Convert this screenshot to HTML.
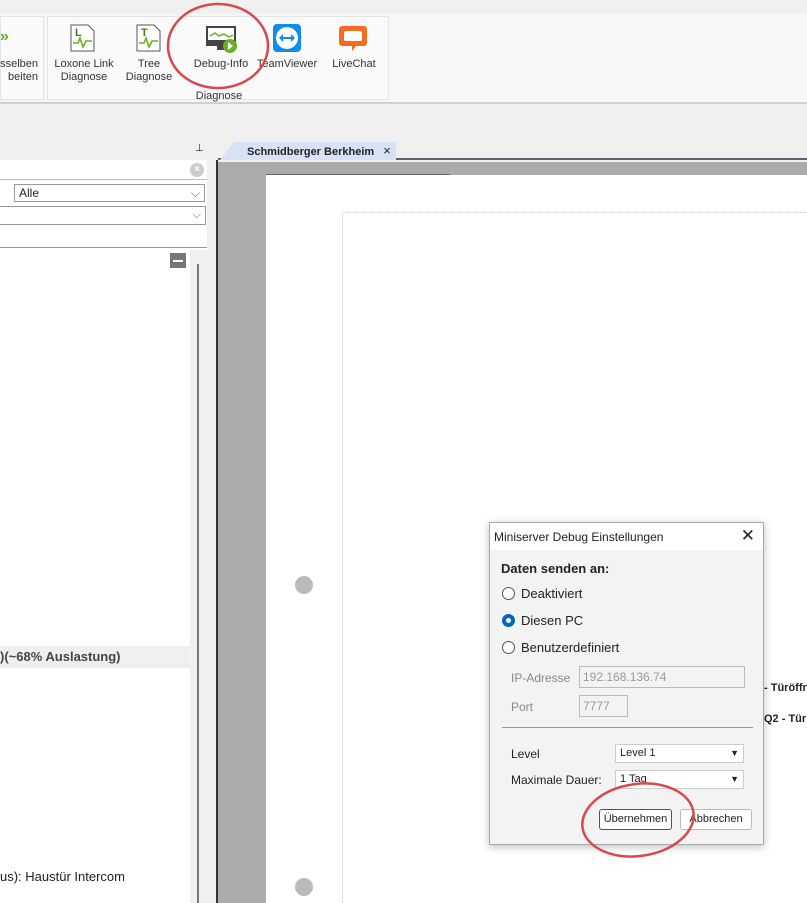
<!DOCTYPE html>
<html><head><meta charset="utf-8"><style>
*{margin:0;padding:0;box-sizing:border-box}
body{width:807px;height:903px;overflow:hidden;background:#f0f0f0;font-family:"Liberation Sans",sans-serif;font-size:12px;color:#222;position:relative}
.a{position:absolute;white-space:nowrap}
.lbl{font-size:11px;text-align:center;color:#333;line-height:13px}
.rb{border-radius:50%;border:1px solid #555;width:13px;height:13px;background:#fff}
.sel{border:1px solid #999;background:#fff;font-size:11px;padding-left:4px;line-height:16px}
</style></head><body>
<div class="a" style="left:0;top:0;width:807px;height:14px;background:#f0f0f0"></div>
<div class="a" style="left:0;top:14px;width:807px;height:90px;background:#f7f7f7;border-bottom:2px solid #d0d0d0"></div>
<div class="a" style="left:0;top:16px;width:44px;height:84px;border:1px solid #e4e4e4;background:#fafafa"></div>
<div class="a" style="left:47px;top:16px;width:342px;height:84px;border:1px solid #e4e4e4;background:#fafafa"></div>
<div class="a" style="left:0;top:28px;width:10px;height:18px;color:#6a3;font-weight:bold;font-size:16px">»</div>
<div class="a lbl" style="left:0;top:58px;width:38px;text-align:right">sselben<br>beiten</div>
<svg class="a" style="left:70px;top:24px" width="26" height="28"><path d="M1 1h17l6 6v20H1z" fill="#fff" stroke="#555"/><text x="5" y="12" font-size="11" font-weight="bold" fill="#4a7d10" font-family="Liberation Sans">L</text><path d="M3 19h5l2-5 3 9 3-6h6" fill="none" stroke="#6ab023" stroke-width="1.6"/></svg>
<div class="a lbl" style="left:50px;top:58px;width:68px">Loxone Link<br>Diagnose</div>
<svg class="a" style="left:136px;top:24px" width="26" height="28"><path d="M1 1h17l6 6v20H1z" fill="#fff" stroke="#555"/><text x="5" y="12" font-size="11" font-weight="bold" fill="#4a7d10" font-family="Liberation Sans">T</text><path d="M3 19h5l2-5 3 9 3-6h6" fill="none" stroke="#6ab023" stroke-width="1.6"/></svg>
<div class="a lbl" style="left:122px;top:58px;width:54px">Tree<br>Diagnose</div>
<svg class="a" style="left:206px;top:26px" width="32" height="28"><rect x="1" y="1" width="28" height="18" fill="#fff" stroke="#444" stroke-width="2"/><rect x="1" y="14" width="28" height="5" fill="#444"/><path d="M4 10l5-3 4 3 5-2 5 3 4-2" fill="none" stroke="#6ab023" stroke-width="1.5"/><rect x="11" y="20" width="8" height="4" fill="#444"/><circle cx="24" cy="20" r="7" fill="#6ab023"/><path d="M22 16l5 4-5 4z" fill="#fff"/></svg>
<div class="a lbl" style="left:186px;top:58px;width:70px">Debug-Info</div>
<div class="a lbl" style="left:186px;top:90px;width:66px">Diagnose</div>
<svg class="a" style="left:273px;top:24px" width="28" height="28"><rect width="28" height="28" rx="4" fill="#0e8ee9"/><circle cx="14" cy="14" r="11" fill="#fff"/><path d="M6 14l4-4v3h8v-3l4 4-4 4v-3h-8v3z" fill="#0e8ee9"/></svg>
<div class="a lbl" style="left:254px;top:58px;width:66px">TeamViewer</div>
<svg class="a" style="left:338px;top:24px" width="30" height="30"><path d="M4 2h22a3 3 0 0 1 3 3v14a3 3 0 0 1-3 3H18l-4 5v-5H4a3 3 0 0 1-3-3V5a3 3 0 0 1 3-3z" fill="#f26c21"/><rect x="6" y="7" width="18" height="10" rx="2" fill="#fff"/></svg>
<div class="a lbl" style="left:322px;top:58px;width:64px">LiveChat</div>
<svg class="a" style="left:164px;top:0" width="110" height="92"><ellipse cx="54" cy="46" rx="50" ry="42" fill="none" stroke="#d9484a" stroke-width="2.5"/></svg>
<div class="a" style="left:0;top:140px;width:207px;height:20px;background:#f0f0f0"></div>
<div class="a" style="left:195px;top:143px;font-size:10px">⊥</div>
<div class="a" style="left:0;top:160px;width:207px;height:743px;background:#fff"></div>
<div class="a" style="left:190px;top:163px;width:14px;height:14px;border-radius:50%;background:#ccc;color:#fff;font-size:10px;text-align:center;line-height:14px;font-weight:bold">×</div>
<div class="a" style="left:0;top:179px;width:207px;border-top:1px solid #bbb"></div>
<div class="a sel" style="left:14px;top:184px;width:191px;height:18px;font-size:12px">Alle<span style="float:right;margin-right:4px;color:#666">⌵</span></div>
<div class="a sel" style="left:-2px;top:206px;width:208px;height:19px"><span style="float:right;margin-right:4px;color:#666">⌵</span></div>
<div class="a" style="left:0;top:247px;width:207px;border-top:1px solid #999"></div>
<div class="a" style="left:190px;top:250px;width:17px;height:653px;background:#f0f0f0"></div>
<div class="a" style="left:197px;top:264px;width:2px;height:639px;background:#777"></div>
<div class="a" style="left:170px;top:253px;width:16px;height:15px;background:#777"><div style="margin:7px 3px;height:2px;background:#fff"></div></div>
<div class="a" style="left:0;top:646px;width:190px;height:22px;background:#efefef;font-weight:bold;font-size:13px;color:#444;line-height:22px">)(~68% Auslastung)</div>
<div class="a" style="left:0;top:869px;font-size:13px">us): Haustür Intercom</div>
<div class="a" style="left:207px;top:140px;width:10px;height:763px;background:#f0f0f0"></div>
<div class="a" style="left:216px;top:160px;width:2px;height:743px;background:#333"></div>
<div class="a" style="left:218px;top:140px;width:589px;height:20px;background:#f0f0f0;border-bottom:2px solid #5a6270"></div>
<div class="a" style="left:220px;top:142px;width:176px;height:18px;background:#d8e2f6;clip-path:polygon(14px 0,100% 0,100% 100%,0 100%);font-weight:bold;font-size:11px;padding-left:27px;line-height:17px">Schmidberger Berkheim <span style="font-weight:normal;margin-left:6px;font-size:13px">×</span></div>
<div class="a" style="left:218px;top:162px;width:589px;height:741px;background:#ababab"></div>
<div class="a" style="left:266px;top:175px;width:541px;height:728px;background:#fff"></div>
<div class="a" style="left:266px;top:174px;width:184px;border-top:1px solid #666"></div>
<div class="a" style="left:342px;top:212px;width:465px;height:691px;border-left:1px dotted #ccc;border-top:1px dotted #ccc"></div>
<div class="a" style="left:295px;top:576px;width:18px;height:18px;border-radius:50%;background:#bbb"></div>
<div class="a" style="left:295px;top:878px;width:18px;height:18px;border-radius:50%;background:#bbb"></div>
<div class="a" style="left:764px;top:682px;font-weight:bold;font-size:11px">- Türöffn</div>
<div class="a" style="left:764px;top:713px;font-weight:bold;font-size:11px">Q2 - Tür</div>
<div class="a" style="left:489px;top:522px;width:275px;height:323px;background:#f3f3f3;border:1px solid #aaa;box-shadow:0 2px 8px rgba(0,0,0,.25)">
 <div style="height:27px;background:#fff;font-size:12px;padding:7px 0 0 4px">Miniserver Debug Einstellungen<span style="position:absolute;right:8px;top:3px;font-size:17px">✕</span></div>
 <div class="a" style="left:11px;top:38px;font-weight:bold;font-size:13px">Daten senden an:</div>
 <div class="a rb" style="left:12px;top:64px"></div><div class="a" style="left:31px;top:63px;font-size:13px">Deaktiviert</div>
 <div class="a rb" style="left:12px;top:91px;border:4px solid #0067c0"></div><div class="a" style="left:31px;top:90px;font-size:13px">Diesen PC</div>
 <div class="a rb" style="left:12px;top:118px"></div><div class="a" style="left:31px;top:117px;font-size:13px">Benutzerdefiniert</div>
 <div class="a" style="left:21px;top:148px;color:#888;font-size:12px">IP-Adresse</div>
 <div class="a" style="left:89px;top:143px;width:166px;height:22px;border:1px solid #bbb;color:#999;padding:3px 3px;font-size:12px">192.168.136.74</div>
 <div class="a" style="left:21px;top:177px;color:#888;font-size:12px">Port</div>
 <div class="a" style="left:89px;top:172px;width:49px;height:22px;border:1px solid #bbb;color:#999;padding:3px 3px;font-size:12px">7777</div>
 <div class="a" style="left:12px;top:204px;width:251px;border-top:1px solid #999"></div>
 <div class="a" style="left:21px;top:224px;font-size:12px">Level</div>
 <div class="a sel" style="left:125px;top:221px;width:129px;height:19px;border-color:#ccc">Level 1<span style="float:right;margin-right:4px;font-size:9px">▼</span></div>
 <div class="a" style="left:21px;top:250px;font-size:12px">Maximale Dauer:</div>
 <div class="a sel" style="left:125px;top:247px;width:129px;height:19px;border-color:#ccc">1 Tag<span style="float:right;margin-right:4px;font-size:9px">▼</span></div>
 <div class="a" style="left:109px;top:286px;width:73px;height:21px;background:#fff;border:1px solid #0067c0;border-radius:3px;font-size:11px;text-align:center;line-height:19px">Übernehmen</div>
 <div class="a" style="left:190px;top:286px;width:72px;height:21px;background:#fff;border:1px solid #bbb;border-radius:3px;font-size:11px;text-align:center;line-height:19px">Abbrechen</div>
</div>
<svg class="a" style="left:578px;top:780px" width="124" height="82"><ellipse cx="60" cy="40" rx="56" ry="36" transform="rotate(-8 60 40)" fill="none" stroke="#d9484a" stroke-width="2.5"/></svg>
</body></html>
